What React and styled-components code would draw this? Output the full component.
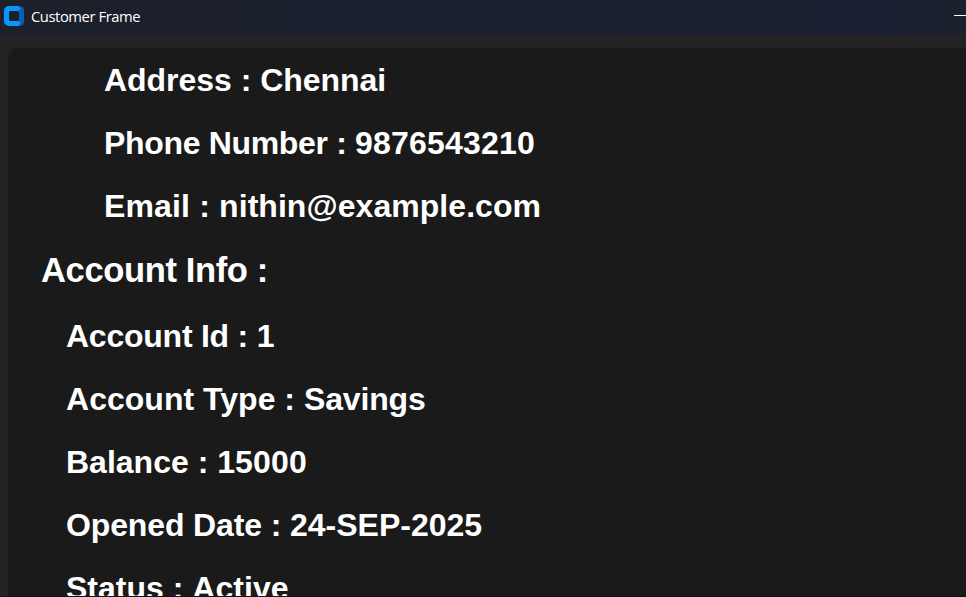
import React from "react";
import styled, { createGlobalStyle } from "styled-components";

const GlobalStyle = createGlobalStyle`
  * { box-sizing: border-box; }
  html, body { margin: 0; background: #242424; overflow: hidden; }
`;

const Window = styled.div`
  display: flex;
  flex-direction: column;
  width: 966px;
  height: 597px;
  overflow: hidden;
  border-bottom: 1px solid #171016;
  background: #232325;
`;

const TitleBar = styled.header`
  display: flex;
  align-items: center;
  flex: 0 0 35px;
  padding: 0 0 3px 4px;
  background: linear-gradient(90deg, #1c202a 0%, #1b2030 50%, #1a2033 92%, #1b222c 100%);
`;

const AppIcon = styled.svg`
  width: 20px;
  height: 20px;
  flex: none;
`;

const Title = styled.span`
  flex: 1;
  padding: 0 0 1px 7px;
  color: #fff;
  font: 14.8px/20px "Open Sans", "Noto Sans", sans-serif;
  letter-spacing: -0.45px;
  white-space: nowrap;
`;

const Minimize = styled.div`
  width: 12px;
  height: 1px;
  margin-bottom: 1px;
  background: #fff;
`;

const Panel = styled.main`
  flex: 1;
  min-height: 0;
  margin: 13px 0 0 8px;
  padding-top: 1px;
  border-radius: 10px 0 0 0;
  background: #1a1a1a;
  overflow: hidden;
`;

const Row = styled.div`
  height: 63px;
  padding-left: ${(p) => p.$indent}px;
  color: #fff;
  font: bold 32px/63px "Liberation Sans", Arial, sans-serif;
  white-space: pre;
`;

const Tracked = styled.span`
  letter-spacing: ${(p) => p.$spacing}px;
`;

const Heading = styled(Row)`
  height: 67px;
  font-size: 34.6px;
  line-height: 64px;
  letter-spacing: -0.4px;
`;

const customer = [
  ["Address", "Chennai", -0.03, -0.05],
  ["Phone Number", "9876543210", -0.33, 0.2],
  ["Email", "nithin@example.com", 0.16, 0.05],
];
const account = [
  ["Account Id", "1", -0.24, 0],
  ["Account Type", "Savings", 0.02, -0.15],
  ["Balance", "15000", 0, 0.15],
  ["Opened Date", "24-SEP-2025", -0.13, 0],
  ["Status", "Active", 0, 0.05],
];

function Fields({ items, indent }) {
  return items.map(([label, value, labelSpacing, valueSpacing]) => (
    <Row key={label} $indent={indent}>
      <Tracked $spacing={labelSpacing}>{label + " : "}</Tracked>
      <Tracked $spacing={valueSpacing}>{value}</Tracked>
    </Row>
  ));
}

export default function App() {
  return (
    <Window>
      <GlobalStyle />
      <TitleBar>
        <AppIcon viewBox="0 0 20 20">
          <rect x="8" width="12" height="20" rx="4.5" fill="#0761b0" />
          <path d="M5 0H14L16.5 2.5L15 5V15L16.5 17.5L14 20H5A5 5 0 0 1 0 15V5A5 5 0 0 1 5 0Z" fill="#0a96fb" />
          <rect x="5" y="5" width="10" height="10" rx="1.5" fill="#1c202a" />
        </AppIcon>
        <Title>Customer Frame</Title>
        <Minimize />
      </TitleBar>
      <Panel>
        <Fields items={customer} indent={96} />
        <Heading $indent={33}>Account Info :</Heading>
        <Fields items={account} indent={58} />
      </Panel>
    </Window>
  );
}
